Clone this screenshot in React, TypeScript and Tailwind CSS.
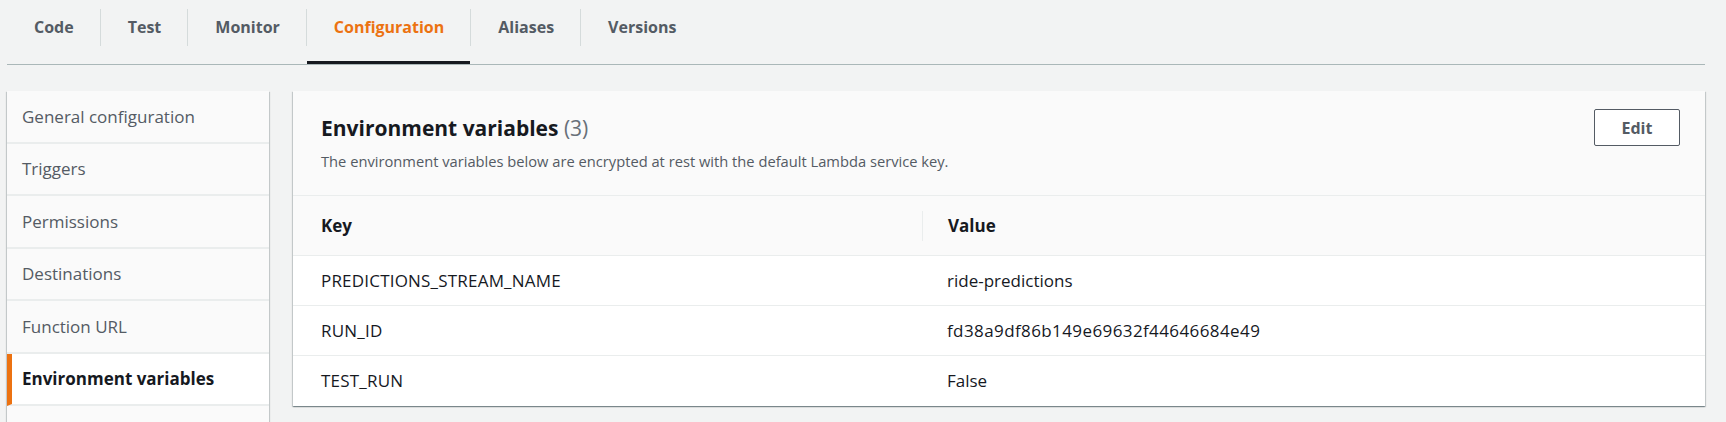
import React from 'react'

const tabs = ['Code', 'Test', 'Monitor', 'Configuration', 'Aliases', 'Versions']
const navItems = [
  'General configuration',
  'Triggers',
  'Permissions',
  'Destinations',
  'Function URL',
  'Environment variables',
  '',
]
const envVars = [
  { key: 'PREDICTIONS_STREAM_NAME', value: 'ride-predictions' },
  { key: 'RUN_ID', value: 'fd38a9df86b149e69632f44646684e49' },
  { key: 'TEST_RUN', value: 'False' },
]

const cardShadow =
  'shadow-[0_1px_1px_0_rgba(0,28,36,0.3),1px_1px_1px_0_rgba(0,28,36,0.15),-1px_1px_1px_0_rgba(0,28,36,0.15)]'

export default function App() {
  const active = 'Configuration'

  return (
    <div
      className="h-screen w-full overflow-hidden bg-[#f2f3f3] pl-[7px] pr-[21px] text-[#16191f]"
      style={{ fontFamily: '"Open Sans", "Noto Sans", sans-serif' }}
    >
      {/* tabs */}
      <div className="flex border-b border-[#aab7b8]">
        {tabs.map((tab, i) => (
          <React.Fragment key={tab}>
            {i > 0 && <span className="mt-[9px] h-[37px] w-px bg-[#d5dbdb]" />}
            <button
              className={`relative flex h-[64px] items-center px-[26px] pb-[10px] pl-[27px] text-[16px] font-bold ${
                tab === active ? 'text-[#ec7211]' : 'text-[#545b64]'
              }`}
            >
              {tab}
              {tab === active && <span className="absolute bottom-0 left-0 right-0 h-[3px] bg-[#16191f]" />}
            </button>
          </React.Fragment>
        ))}
      </div>

      <div className="mt-[26px] flex items-start gap-[24px]">
        {/* side nav */}
        <nav className={`w-[262px] shrink-0 bg-[#fafafa] ${cardShadow}`}>
          {navItems.map((item, i) => {
            const isActive = item === 'Environment variables'
            return (
              <div
                key={i}
                className={`flex h-[52.5px] items-center border-b-2 border-[#eaeded] text-[17px] ${
                  isActive
                    ? 'border-l-[5px] border-l-[#ec7211] bg-white pl-[10px] font-bold text-[#16191f]'
                    : 'pl-[15px] text-[#545b64]'
                }`}
              >
                {item}
              </div>
            )
          })}
        </nav>

        {/* env vars panel */}
        <section className={`flex-1 bg-white ${cardShadow}`}>
          <div className="flex items-start justify-between border-b border-[#eaeded] bg-[#fafafa] pl-[28px] pr-[25px] pt-[18px] pb-[24px]">
            <div className="pt-[5px]">
              <h2 className="text-[21px] font-bold leading-[28px]">
                Environment variables <span className="font-normal text-[#687078]">(3)</span>
              </h2>
              <p className="mt-[9px] text-[14.7px] leading-[20px] text-[#545b64]">
                The environment variables below are encrypted at rest with the default Lambda service key.
              </p>
            </div>
            <button className="h-[37px] w-[86px] rounded-[2px] border border-[#545b64] bg-white text-[16px] font-bold text-[#545b64]">
              Edit
            </button>
          </div>

          <div className="grid h-[60px] grid-cols-[629px_1fr] items-center border-b border-[#eaeded] bg-[#fafafa] text-[17px] font-bold">
            <div className="pl-[28px]">Key</div>
            <div className="flex items-center">
              <span className="h-[30px] w-px bg-[#eaeded]" />
              <span className="pl-[25px]">Value</span>
            </div>
          </div>

          {envVars.map((row, i) => (
            <div
              key={row.key}
              className={`grid h-[50px] grid-cols-[629px_1fr] items-center text-[17px] ${
                i < envVars.length - 1 ? 'border-b border-[#eaeded]' : ''
              }`}
            >
              <div className="pl-[28px] tracking-[0.2px]">{row.key}</div>
              <div className={`pl-[25px] ${row.key === 'RUN_ID' ? 'tracking-[0.4px]' : ''}`}>{row.value}</div>
            </div>
          ))}
        </section>
      </div>
    </div>
  )
}
